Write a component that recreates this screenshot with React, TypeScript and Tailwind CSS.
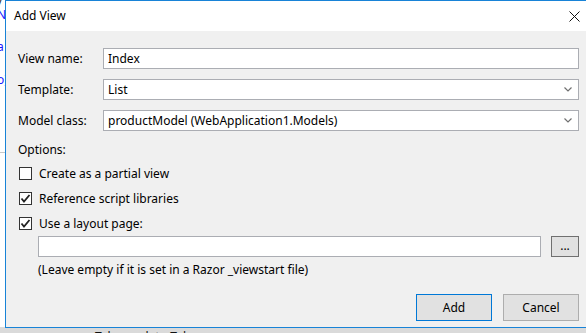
const font = { fontFamily: '"Segoe UI", "Noto Sans", sans-serif' };

function Chevron() {
  return (
    <svg width="8" height="5" viewBox="0 0 8 5" className="shrink-0">
      <path d="M0.5 0.5 L4 4 L7.5 0.5" fill="none" stroke="#707070" strokeWidth="1.2" />
    </svg>
  );
}

function Checkbox({ checked, label }: { checked?: boolean; label: string }) {
  return (
    <div className="flex items-center h-[13px]">
      <div className="w-[13px] h-[13px] border border-[#333333] bg-white flex items-center justify-center shrink-0">
        {checked && (
          <svg width="11" height="11" viewBox="0 0 11 11">
            <path d="M1.5 5.5 L4 8.5 L9.5 2" fill="none" stroke="#222" strokeWidth="1.8" />
          </svg>
        )}
      </div>
      <span className="ml-[7px] leading-[16px]">{label}</span>
    </div>
  );
}

function Field({ label, value, select }: { label: string; value: string; select?: boolean }) {
  return (
    <div className="flex items-center h-[21px]">
      <span className="w-[85px] shrink-0">{label}</span>
      <div className="flex-1 h-[21px] bg-white border border-[#abadb3] flex items-center justify-between pl-[4px] pr-[6px]">
        <span>{value}</span>
        {select && <Chevron />}
      </div>
    </div>
  );
}

export default function App() {
  return (
    <div className="relative w-[586px] h-[333px] overflow-hidden bg-white text-[12px] text-black" style={font}>
      {/* window behind */}
      <div className="absolute left-0 top-0 w-[5px] h-[333px] bg-white overflow-hidden text-[12px] leading-[16px]">
        <div className="h-[12px] leading-[12px] -mt-[5px] text-[#222] -ml-[4px]">y</div>
        <div className="h-[16px] text-[#1a1aff] -ml-[3px]">Ne</div>
        <div className="h-[16px] mt-[16px] text-[#1a1aff] -ml-[3px]">a</div>
        <div className="h-[16px] mt-[17px] text-[#1a1aff] -ml-[3px]">o)</div>
        <div className="mt-[64px] h-px bg-[#c8c8c8]" />
      </div>
      <div className="absolute left-0 top-[327px] w-[586px] h-[6px] bg-[#dadada] overflow-hidden">
        <div className="flex text-[12px] leading-[14px] text-[#111] ml-[95px] mt-[3px]">
          <span>Tek</span>
          <span className="ml-[24px]">plate</span>
          <span className="ml-[4px]">Tek</span>
        </div>
      </div>

      {/* dialog */}
      <div className="absolute left-[5px] top-0 w-[590px] h-[328px] border border-[#1883d7] bg-[#f0f0f0] flex flex-col">
        <div className="h-[30px] bg-white flex items-center justify-between pl-[8px] pr-[14px] shrink-0">
          <span>Add View</span>
          <svg width="11" height="11" viewBox="0 0 11 11">
            <path d="M0.5 0.5 L10.5 10.5 M10.5 0.5 L0.5 10.5" stroke="#111" strokeWidth="1" />
          </svg>
        </div>
        <div className="flex flex-col pl-[12px] pr-[15px]">
          <div className="mt-[17px]">
            <Field label="View name:" value="Index" />
          </div>
          <div className="mt-[10px]">
            <Field label="Template:" value="List" select />
          </div>
          <div className="mt-[10px]">
            <Field label="Model class:" value="productModel (WebApplication1.Models)" select />
          </div>
          <div className="mt-[11px] h-[16px] leading-[16px]">Options:</div>
          <div className="mt-[9px] ml-[1px]">
            <Checkbox label="Create as a partial view" />
          </div>
          <div className="mt-[12px] ml-[1px]">
            <Checkbox checked label="Reference script libraries" />
          </div>
          <div className="mt-[12px] ml-[1px]">
            <Checkbox checked label="Use a layout page:" />
          </div>
          <div className="mt-[6px] ml-[20px] flex items-center">
            <div className="w-[503px] h-[21px] bg-white border border-[#abadb3]" />
            <div className="ml-[10px] flex-1 h-[21px] bg-[#e1e1e1] border border-[#707070] flex items-center justify-center leading-none pb-[2px]">
              ...
            </div>
          </div>
          <div className="mt-[5px] ml-[20px] h-[16px] leading-[16px]">
            (Leave empty if it is set in a Razor _viewstart file)
          </div>
          <div className="mt-[16px] flex justify-end gap-[11px]">
            <div className="w-[76px] h-[27px] bg-[#e1e1e1] border border-[#0078d7] flex items-center justify-center">
              Add
            </div>
            <div className="w-[76px] h-[27px] bg-[#e1e1e1] border border-[#adadad] flex items-center justify-center">
              Cancel
            </div>
          </div>
        </div>
      </div>
    </div>
  );
}
